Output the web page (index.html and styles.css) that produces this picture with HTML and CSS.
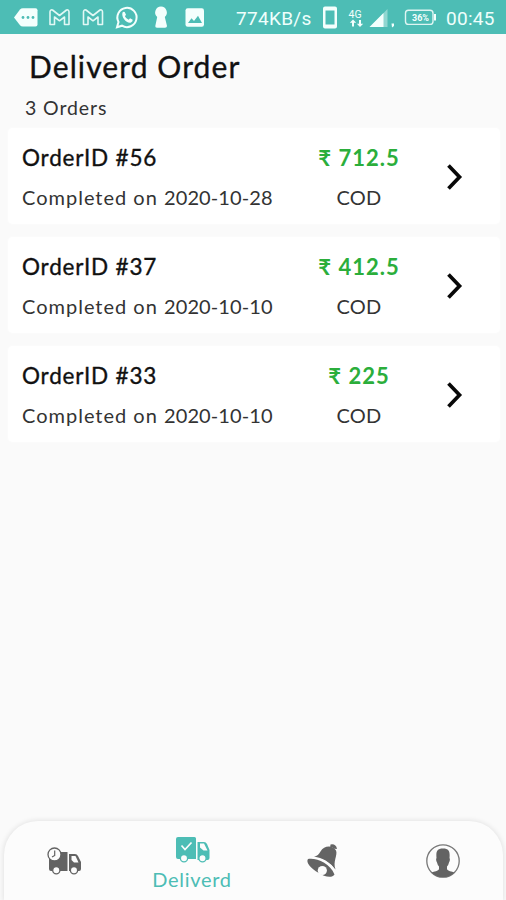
FILE: index.html
```html
<!DOCTYPE html>
<html lang="en">
<head>
<meta charset="utf-8">
<meta name="viewport" content="width=device-width">
<title>Deliverd Order</title>
<link rel="stylesheet" href="styles.css">
</head>
<body>
<div class="app">
  <header class="status">
    <svg class="status-left" width="210" height="34" viewBox="0 0 210 34" fill="#f4fffd">
      <path d="M14 17.5L20 9.5Q21 8.3 23 8.3H35.5Q37.5 8.3 37.5 10.3V24.5Q37.5 26.5 35.5 26.5H23Q21 26.5 20 25.3Z"/>
      <g fill="#4dbdb5"><circle cx="23" cy="17.5" r="1.4"/><circle cx="28" cy="17.5" r="1.4"/><circle cx="33" cy="17.5" r="1.4"/></g>
      <g fill="none" stroke="#e2f8f5" stroke-width="1.6" stroke-linejoin="round">
        <path id="mail" d="M50 24.500V12Q50 9.500 52.500 10L59.500 15.500L66.500 10Q69 9.500 69 12V24.500H64.500V17L59.500 20.800L54.500 17V24.500Z"/>
        <use href="#mail" x="33.500"/>
      </g>
      <path d="M117 27.300L118.500 22A9.600 9.600 0 1 1 122 25.700Z" fill="none" stroke="#f4fffd" stroke-width="2"/>
      <path d="M122.500 12.500Q123.500 11.300 124.700 12L126 14.800L124.900 16.300Q126 18.700 128.600 19.800L130.100 18.300L132.700 19.800Q133 21.500 131 22.600C127 24 121 17.500 122.500 12.500Z"/>
      <path d="M161 6.500A6 6 0 0 1 164.800 17L167 26Q167 27.800 165 27.800H157Q155 27.800 155.300 26L157.200 17A6 6 0 0 1 161 6.500Z"/>
      <rect x="185.500" y="8.300" width="18.500" height="18.500" rx="2.200"/>
      <path d="M188 23L191.500 18.300L194 21L198 15.800L202 23Z" fill="#4dbdb5"/>
    </svg>
    <span class="speed">774KB/s</span>
    <svg class="status-right" width="120" height="34" viewBox="320 0 120 34" fill="#f4fffd">
      <path fill-rule="evenodd" d="M325 6.500H335Q337 6.500 337 8.500V26.500Q337 28.500 335 28.500H325Q323 28.500 323 26.500V8.500Q323 6.500 325 6.500ZM325.500 10.500V24.500H334.500V10.500Z"/>
      <text class="network" x="348.500" y="18">4G</text>
      <path d="M353 19.500L356.200 22.700H354V26.500H352V22.700H349.800ZM360 27L356.800 23.700H359V20H361V23.700H363.200Z"/>
      <path d="M387.500 9V27H370Z" opacity=".4"/>
      <path d="M383.500 13V27H369.500Z"/>
      <path d="M391.500 23.500H394V26L392 27.500Z"/>
      <rect x="405.500" y="10.200" width="27.500" height="14.200" rx="3" fill="none" stroke="#dff5f2" stroke-width="1.400"/>
      <path d="M434 14H436V20.500H434Z"/>
      <text class="battery" x="412" y="21">36%</text>
    </svg>
    <span class="clock">00:45</span>
  </header>

  <main class="content">
    <h1>Deliverd Order</h1>
    <p class="count">3 Orders</p>
    <section class="orders">
      <article class="card">
        <div class="info"><h2>OrderID #56</h2><p>Completed on <span class="date">2020-10-28</span></p></div>
        <div class="payment"><strong>₹ 712.5</strong><span>COD</span></div>
        <svg class="chevron" width="20" height="28" viewBox="0 0 20 28"><path d="M3.500 2.500L14.500 14L3.500 25.500"/></svg>
      </article>
      <article class="card">
        <div class="info"><h2>OrderID #37</h2><p>Completed on <span class="date">2020-10-10</span></p></div>
        <div class="payment"><strong>₹ 412.5</strong><span>COD</span></div>
        <svg class="chevron" width="20" height="28" viewBox="0 0 20 28"><path d="M3.500 2.500L14.500 14L3.500 25.500"/></svg>
      </article>
      <article class="card">
        <div class="info"><h2>OrderID #33</h2><p>Completed on <span class="date">2020-10-10</span></p></div>
        <div class="payment"><strong>₹ 225</strong><span>COD</span></div>
        <svg class="chevron" width="20" height="28" viewBox="0 0 20 28"><path d="M3.500 2.500L14.500 14L3.500 25.500"/></svg>
      </article>
    </section>
  </main>

  <nav class="tabs">
    <a class="tab">
      <svg width="36" height="30" viewBox="46 846 36 30">
        <path fill="#636363" d="M49 852H67.500V871H51Q49 871 49 869ZM69 854H75Q77 854 78 856L81 862V869Q81 871 79 871H69Z"/>
        <path fill="#fcfcfc" d="M71.500 856H75.500L78.500 862.500H74L71.500 860Z"/>
        <circle cx="54.500" cy="854.500" r="6.500" fill="#fcfcfc" stroke="#636363" stroke-width="1.300"/>
        <path d="M54.700 850.500V855.500L52 857" fill="none" stroke="#636363" stroke-width="1.200"/>
        <g fill="#fcfcfc" stroke="#636363" stroke-width="1.300"><circle cx="56.300" cy="870.300" r="3.600"/><circle cx="74" cy="870.300" r="3.600"/></g>
      </svg>
    </a>
    <a class="tab active">
      <svg width="36" height="28" viewBox="174 836 36 28">
        <path fill="#4dbdb5" d="M178 837H194.500Q196 837 196 838.500V859H178Q176 859 176 857V839Q176 837 178 837ZM197.500 842H204Q206 842 207 844L209.500 850V858Q209.500 860 207.500 860H197.500Z"/>
        <path fill="#fcfcfc" d="M200 843.500H204L207.500 850.500H203.500L200 847.500Z"/>
        <path d="M181.500 845.500L185 849.500L191.500 842.500" fill="none" stroke="#fcfcfc" stroke-width="1.700"/>
        <g fill="#fcfcfc" stroke="#4dbdb5" stroke-width="1.300"><circle cx="184" cy="858.300" r="3.600"/><circle cx="202.500" cy="858.300" r="3.600"/></g>
      </svg>
      <span>Deliverd</span>
    </a>
    <a class="tab">
      <svg width="34" height="36" viewBox="305 843 34 36">
        <path fill="#646464" d="M329.500 844.500Q335 843.500 336 849L333.500 848.800Q331.500 847 329.200 847Z"/>
        <path fill="#646464" d="M313 857Q317.500 855.500 319.500 851.500C323 845 332 845 335 850.500C337 855 331.500 861.500 334.500 869.500Q327 859.500 313 857Z"/>
        <path fill="#646464" d="M307 859C315 857.500 329 863 333.500 874.500C331 878.500 323.500 877 317 872.500C310 868 304.500 862.500 307 859Z"/>
        <path d="M311 857.500Q326 858 334 871" fill="none" stroke="#fcfcfc" stroke-width="1.300"/>
        <circle cx="321.300" cy="870.500" r="4.600" fill="#fcfcfc"/>
      </svg>
    </a>
    <a class="tab">
      <svg width="36" height="36" viewBox="425 843 36 36">
        <circle cx="443" cy="861" r="16.200" fill="#fcfcfc" stroke="#777" stroke-width="1.300"/>
        <path fill="#636363" d="M443 848.500C449.500 848.500 450 852 449.500 858Q450.500 859.500 449 862.500Q448.500 865 447 866.500V869C447.500 871 452 871.500 454.500 872.500A16.200 16.200 0 0 1 431.500 872.500C434 871.500 438.500 871 439 869V866.500Q437.500 865 437 862.500Q435.500 859.500 436.500 858C436 852 436.500 848.500 443 848.500Z"/>
      </svg>
    </a>
  </nav>
</div>
</body>
</html>
```
FILE: styles.css
```css
* { box-sizing: border-box; }
body { margin: 0; }
h1, h2, p { margin: 0; }

.app {
  width: 506px;
  height: 900px;
  display: flex;
  flex-direction: column;
  overflow: hidden;
  background: #fafafa;
  color: #111;
  font-family: Lato, "Noto Sans", sans-serif;
}

.status {
  display: flex;
  align-items: center;
  flex: none;
  height: 34px;
  background: #4dbdb5;
  color: #effffc;
  font: 19px/34px Roboto, sans-serif;
}
.status svg { flex: none; }
.speed { width: 84px; margin-left: 26px; padding-top: 3px; letter-spacing: .3px; }
.clock { margin-left: 6px; padding-top: 3px; letter-spacing: .3px; }
.network { font: 10.5px Roboto, sans-serif; }
.battery { font: bold 9px Roboto, sans-serif; }

.content { flex: 1; }
h1 {
  margin: 12px 0 0 29px;
  font-size: 30px;
  line-height: 40px;
  font-weight: 400;
  letter-spacing: 1.1px;
  -webkit-text-stroke: .35px #111;
}
.count {
  margin: 9px 0 0 25px;
  font-size: 19.5px;
  line-height: 26px;
  letter-spacing: .9px;
  color: #333;
}
.orders {
  display: flex;
  flex-direction: column;
  gap: 12.750px;
  padding: 7px 6px 0 8px;
}
.card {
  display: flex;
  height: 96px;
  padding: 16px 0 0 14px;
  border-radius: 5px;
  background: #fff;
  box-shadow: 0 0 3px rgba(255, 255, 255, .9);
}
.info { width: 280px; white-space: nowrap; }
h2 {
  font-size: 22.500px;
  line-height: 28px;
  font-weight: 400;
  letter-spacing: .8px;
  -webkit-text-stroke: .35px #111;
}
.info p, .payment span {
  margin-top: 12px;
  font-size: 20px;
  line-height: 26px;
  letter-spacing: 1px;
  color: #333;
}
.payment span { letter-spacing: .2px; }
.info .date { letter-spacing: .1px; }
.payment {
  display: flex;
  flex-direction: column;
  align-items: center;
  width: 114px;
}
.payment strong {
  font-size: 22px;
  line-height: 28px;
  letter-spacing: 1px;
  color: #2bae3b;
}
.chevron { margin: 19px 0 0 29px; }
.chevron path { fill: none; stroke: #080808; stroke-width: 3.700; }

.tabs {
  display: flex;
  flex: none;
  height: 79px;
  margin: 0 3px 0 4px;
  border-radius: 34px 34px 0 0;
  background: #fcfcfc;
  box-shadow: 0 0 5px 1px rgba(0, 0, 0, .09);
}
.tab {
  display: flex;
  flex: none;
  flex-direction: column;
  align-items: center;
  width: 136px;
  padding-top: 22px;
}
.tab:first-child { width: 120px; padding-top: 25px; }
.tab:last-child { width: 115px; }
.tab:nth-child(3) { width: 125px; }
.active { padding-top: 15px; color: #4dbdb5; }
.active span { margin-top: 2px; font-size: 20px; line-height: 26px; letter-spacing: .7px; }
```
